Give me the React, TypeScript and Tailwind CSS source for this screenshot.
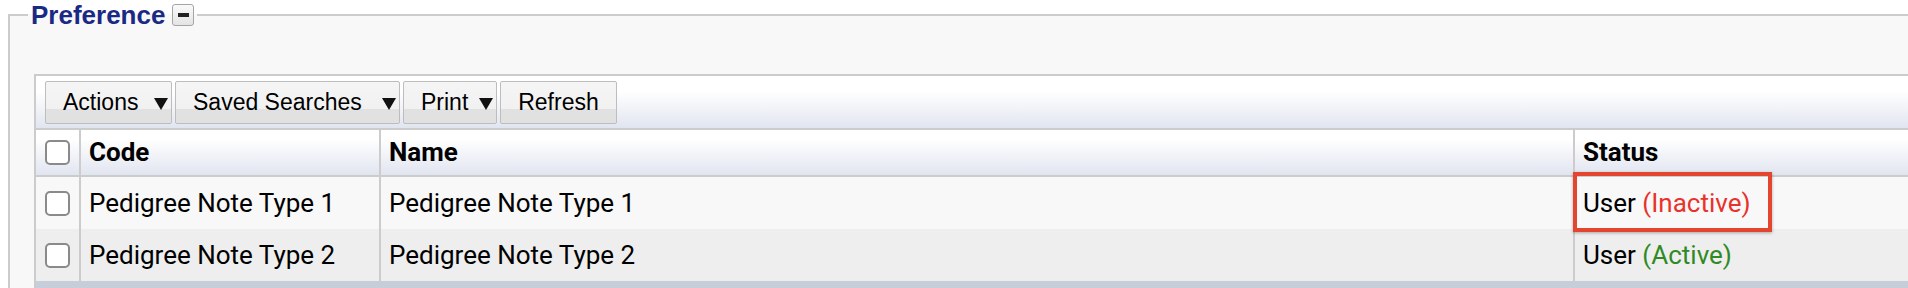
import { ReactNode } from 'react'

interface Row {
  id: number
  code: string
  name: string
  active: boolean
}

const rows: Row[] = [
  { id: 1, code: 'Pedigree Note Type 1', name: 'Pedigree Note Type 1', active: false },
  { id: 2, code: 'Pedigree Note Type 2', name: 'Pedigree Note Type 2', active: true },
]

function ToolButton({ width, children, arrow = true }: { width: string; children: ReactNode; arrow?: boolean }) {
  return (
    <button
      className={`${width} h-[43px] flex items-center ${arrow ? 'justify-between pl-[17px] pr-[3px]' : 'justify-center'} rounded-[2px] border border-[#bdbdbd] bg-[linear-gradient(#f5f5f5_0%,#f1f1f1_66%,#e1e1e1_67%,#e1e1e1_100%)] text-[23px] text-black font-['Liberation_Sans',Arial,sans-serif]`}
    >
      <span>{children}</span>
      {arrow && (
        <svg width="14" height="12" viewBox="0 0 14 12" className="mt-[2px]">
          <polygon points="0,0 14,0 7,12" fill="#111" />
        </svg>
      )}
    </button>
  )
}

function Checkbox() {
  return <span className="block w-[25px] h-[25px] rounded-[5px] border-2 border-[#8a8a8a] bg-white" />
}

export default function App() {
  return (
    <div className="w-[1908px] h-[288px] overflow-hidden bg-white">
      <fieldset className="ml-[8px] w-[1940px] h-[320px] border-2 border-[#cccccc] bg-[#f8f8f8] pl-[24px]">
        <legend className="ml-[-6px] px-[3px] h-[30px] flex items-center gap-[7px]">
          <span className="text-[26px] font-bold text-[#1a2984] font-['Liberation_Sans',Arial,sans-serif] leading-none">
            Preference
          </span>
          <span className="w-[22px] h-[22px] rounded-[3px] border border-[#a5a5a5] bg-[linear-gradient(#fafafa,#e4e4e4)] flex items-center justify-center">
            <span className="block w-[11px] h-[4px] bg-[#222]" />
          </span>
        </legend>

        <div className="mt-[44px] border-l-2 border-t-2 border-[#cccccc] font-['Roboto',sans-serif] text-[26px] text-black">
          <div className="h-[54px] pt-[5px] pl-[9px] flex gap-[3px] border-b-2 border-[#cccccc] bg-gradient-to-b from-white from-30% to-[#e1e5f0]">
            <ToolButton width="w-[127px]">Actions</ToolButton>
            <ToolButton width="w-[225px]">Saved Searches</ToolButton>
            <ToolButton width="w-[94px]">Print</ToolButton>
            <ToolButton width="w-[117px]" arrow={false}>Refresh</ToolButton>
          </div>

          <div className="flex h-[47px] border-b-2 border-[#cccccc] bg-gradient-to-b from-white from-20% to-[#e1e5f0] font-bold">
            <div className="w-[45px] shrink-0 border-r-2 border-[#cccccc] flex items-center justify-center">
              <Checkbox />
            </div>
            <div className="w-[300px] shrink-0 border-r-2 border-[#cccccc] flex items-center pl-[8px]">Code</div>
            <div className="w-[1194px] shrink-0 border-r-2 border-[#cccccc] flex items-center pl-[8px]">Name</div>
            <div className="flex-1 flex items-center pl-[8px]">Status</div>
          </div>

          {rows.map((row) => (
            <div key={row.id} className={`flex h-[52px] ${row.id % 2 === 1 ? 'bg-[#f8f8f8]' : 'bg-[#eeeeee]'}`}>
              <div className="w-[45px] shrink-0 border-r-2 border-[#cccccc] flex items-center justify-center">
                <Checkbox />
              </div>
              <div className="w-[300px] shrink-0 border-r-2 border-[#cccccc] flex items-center pl-[8px]">{row.code}</div>
              <div className="w-[1194px] shrink-0 border-r-2 border-[#cccccc] flex items-center pl-[8px]">{row.name}</div>
              <div className="relative flex-1 flex items-center pl-[8px]">
                <span>
                  User{' '}
                  {row.active ? (
                    <span className="text-[#2f8a24]">(Active)</span>
                  ) : (
                    <span className="text-[#e8322b]">(Inactive)</span>
                  )}
                </span>
                {!row.active && (
                  <span className="absolute left-[-2px] top-[-5px] w-[199px] h-[60px] border-[4px] border-[#e3452e] shadow-[0_1px_3px_rgba(0,0,0,0.3)]" />
                )}
              </div>
            </div>
          ))}

          <div className="h-[12px] bg-[#c8ced9]" />
        </div>
      </fieldset>
    </div>
  )
}
